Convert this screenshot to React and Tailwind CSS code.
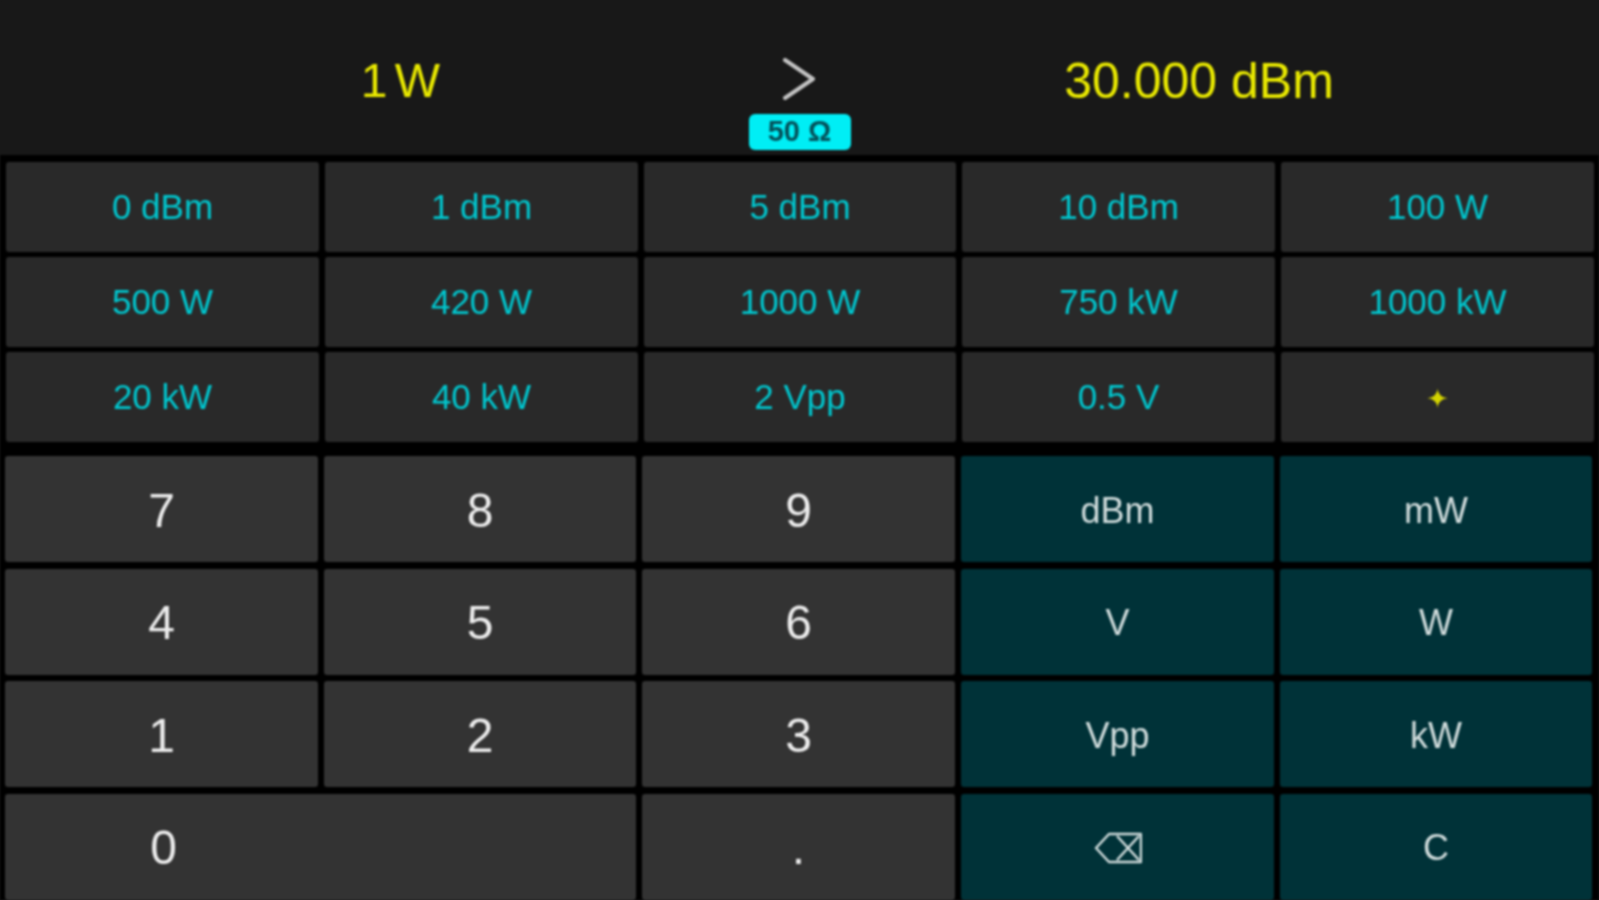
// App.jsx
const presets = [
  '0 dBm', '1 dBm', '5 dBm', '10 dBm', '100 W',
  '500 W', '420 W', '1000 W', '750 kW', '1000 kW',
  '20 kW', '40 kW', '2 Vpp', '0.5 V',
]

function Backspace() {
  return (
    <svg width="48" height="32" viewBox="0 0 48 32" fill="none" stroke="currentColor" strokeWidth="2.5" strokeLinejoin="round">
      <path d="M47 2H15L2 16l13 14h32z" />
      <path d="M23 4l22 24M45 4L23 28" />
    </svg>
  )
}

function PadKey({ children, className = '' }) {
  return (
    <button className={`h-[106px] rounded-[3px] bg-[#333333] pt-[3px] text-[48px] text-[#ececec] flex items-center justify-center ${className}`}>
      {children}
    </button>
  )
}

function UnitKey({ children }) {
  return (
    <button className="h-[106px] rounded-[3px] bg-[#003238] pt-[3px] text-[36px] text-[#d0dcdc] flex items-center justify-center">
      {children}
    </button>
  )
}

export default function App() {
  return (
    <div className="h-[900px] w-[1599px] overflow-hidden bg-[#181818]">
      <div className="h-full bg-black font-['Liberation_Sans',Arial,sans-serif] blur-[1px]">
        {/* Readout */}
        <div className="flex h-[155px] bg-[#181818]">
          <div className="w-[598px] pl-[200px] pt-[53px] text-center text-[48px] leading-[56px] tracking-[-3px] text-[#e8e800]">1 W</div>
          <div className="flex w-[401px] flex-col items-center pt-[58px]">
            <svg width="34" height="42" viewBox="0 0 34 42" fill="none" stroke="#c4c4c4" strokeWidth="4" strokeLinecap="round" strokeLinejoin="round">
              <path d="M3 2l28 19L3 40" />
            </svg>
            <div className="ml-[2px] mt-[14px] flex h-[36px] w-[102px] items-center justify-center rounded-[6px] bg-[#00eef5] text-[29px] font-bold text-[#04515a]">50 Ω</div>
          </div>
          <div className="w-[600px] pr-[200px] pt-[53px] text-center text-[50px] leading-[56px] text-[#e8e800]">30.000 dBm</div>
        </div>

        {/* Presets */}
        <div className="mt-[7px] grid grid-cols-[313px_313px_312px_313px_313px] gap-x-[6px] gap-y-[5px] pl-[6px]">
          {presets.map(p => (
            <button key={p} className="flex h-[90px] items-center justify-center rounded-[3px] bg-[#292929] text-[35px] text-[#00c6ce]">
              {p}
            </button>
          ))}
          <button className="flex h-[90px] items-center justify-center rounded-[3px] bg-[#292929] pt-[5px] font-['DejaVu_Sans',sans-serif] text-[27px] text-[#d4d400]">
            ✦
          </button>
        </div>

        {/* Keypad */}
        <div className="mt-[14px] grid grid-cols-[313px_312px_313px_313px_312px] gap-x-[6px] gap-y-[6.67px] pl-[5px]">
          <PadKey>7</PadKey><PadKey>8</PadKey><PadKey>9</PadKey><UnitKey>dBm</UnitKey><UnitKey>mW</UnitKey>
          <PadKey>4</PadKey><PadKey>5</PadKey><PadKey>6</PadKey><UnitKey>V</UnitKey><UnitKey>W</UnitKey>
          <PadKey>1</PadKey><PadKey>2</PadKey><PadKey>3</PadKey><UnitKey>Vpp</UnitKey><UnitKey>kW</UnitKey>
          <PadKey className="col-span-2 !justify-start">
            <span className="w-[317px] text-center">0</span>
          </PadKey>
          <PadKey>.</PadKey>
          <UnitKey><Backspace /></UnitKey>
          <UnitKey>C</UnitKey>
        </div>
      </div>
    </div>
  )
}
